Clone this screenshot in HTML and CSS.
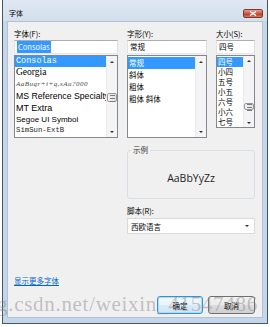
FILE: index.html
```html
<!DOCTYPE html>
<html lang="zh-CN">
<head>
    <meta charset="UTF-8">
    <meta name="viewport" content="width=device-width, initial-scale=1.0">
    <title>字体</title>
    <link rel="stylesheet" href="styles.css">
</head>
<body>
    <div class="window">
        <div class="titlebar">
            <span class="title">字体</span>
            <span class="close">
                <svg width="8" height="5" viewBox="0 0 8 5"><path d="M1 0.5 L7 4.5 M7 0.5 L1 4.5" stroke="#fff" stroke-width="1.4"/></svg>
            </span>
        </div>

        <div class="client">
            <div class="grid">
                <div class="label">字体(F):</div>
                <div class="label">字形(Y):</div>
                <div class="label">大小(S):</div>

                <div class="input"><span class="sel">Consolas</span></div>
                <div class="input">常规</div>
                <div class="input">四号</div>

                <div class="list font-list">
                    <div class="items">
                        <div class="item active f-consolas">Consolas</div>
                        <div class="item f-georgia">Georgia</div>
                        <div class="item f-script">AaBuqr+i+q,sAu?000</div>
                        <div class="item f-msref">MS Reference Specialty</div>
                        <div class="item f-mtextra">MT Extra</div>
                        <div class="item f-segoe">Segoe UI Symbol</div>
                        <div class="item f-simsun">SimSun-ExtB</div>
                    </div>
                    <div class="scroll">
                        <span class="btn"><span class="arrow up"></span></span>
                        <span class="track"><span class="thumb"></span></span>
                        <span class="btn"><span class="arrow down"></span></span>
                    </div>
                </div>

                <div class="list style-list">
                    <div class="items">
                        <div class="item active">常规</div>
                        <div class="item">斜体</div>
                        <div class="item">粗体</div>
                        <div class="item">粗体 斜体</div>
                    </div>
                    <div class="scroll">
                        <span class="btn"><span class="arrow up"></span></span>
                        <span class="track"></span>
                        <span class="btn"><span class="arrow down"></span></span>
                    </div>
                </div>

                <div class="list size-list">
                    <div class="items">
                        <div class="item active">四号</div>
                        <div class="item">小四</div>
                        <div class="item">五号</div>
                        <div class="item">小五</div>
                        <div class="item">六号</div>
                        <div class="item">小六</div>
                        <div class="item">七号</div>
                    </div>
                    <div class="scroll">
                        <span class="btn"><span class="arrow up"></span></span>
                        <span class="track"><span class="thumb"></span></span>
                        <span class="btn"><span class="arrow down"></span></span>
                    </div>
                </div>

                <fieldset class="sample">
                    <legend>示例</legend>
                    <div class="sample-text">AaBbYyZz</div>
                </fieldset>

                <div class="label script-label">脚本(R):</div>
                <div class="combo">
                    <span>西欧语言</span>
                    <span class="arrow down"></span>
                </div>
            </div>

            <a class="more" href="#">显示更多字体</a>

            <div class="actions">
                <button class="button default">确定</button>
                <button class="button cancel">取消</button>
            </div>
        </div>
    </div>

    <div class="watermark">g.csdn.net/weixin_41547486</div>
</body>
</html>
```

FILE: styles.css
```css
* {
    box-sizing: border-box;
}

body {
    margin: 0;
    background: #fff;
    font-family: "Noto Sans CJK SC", "Noto Sans", sans-serif;
    font-size: 7.5px;
    color: #000;
}

.window {
    display: flex;
    flex-direction: column;
    width: 266px;
    height: 324px;
    margin-left: 2px;
    padding-bottom: 5px;
    border: 1px solid #4a5563;
    border-top: none;
    background: #c3d6ec;
}

.titlebar {
    display: flex;
    justify-content: space-between;
    align-items: flex-start;
    height: 21px;
    padding: 0 4px 0 6px;
    background: linear-gradient(#dfe8f3, #d3dfed);
}

.title {
    margin-top: 8px;
    line-height: 10px;
    font-size: 7px;
}

.close {
    display: flex;
    justify-content: center;
    align-items: center;
    width: 20px;
    height: 9px;
    margin-top: 9px;
    border: 1px solid #86392b;
    border-radius: 2px;
    background: linear-gradient(#e6a191, #c9553f 50%, #b73a23 55%, #d47a62);
}

.client {
    display: flex;
    flex-direction: column;
    flex: 1;
    margin: 0 4px;
    padding: 7px 7px 3px 6px;
    border: 1px solid #b3c2d3;
    background: #f0f0f0;
}

.grid {
    display: grid;
    grid-template-columns: 104px 80px 39px;
    column-gap: 9px;
    align-items: start;
}

.label {
    height: 10px;
    line-height: 10px;
}

.input {
    height: 14px;
    margin-top: 1px;
    padding-left: 2px;
    line-height: 12px;
    white-space: nowrap;
    background: #fff;
    border: 1px solid;
    border-color: #abadb3 #dbdfe6 #e3e9ef #e2e3ea;
}

.sel {
    display: inline-block;
    padding: 0 1px;
    background: #3399ff;
    color: #fff;
}

/* list boxes */

.list {
    display: flex;
    height: 83px;
    margin-top: 1px;
    background: #fff;
    border: 1px solid #828790;
    overflow: hidden;
}

.items {
    flex: 1;
    min-width: 0;
    overflow: hidden;
}

.item {
    height: 12px;
    padding-left: 1px;
    line-height: 12px;
    white-space: nowrap;
    overflow: hidden;
}

.item.active {
    background: #3399ff;
    color: #fff;
}

.font-list .item {
    font-family: "Liberation Sans", sans-serif;
    height: 11px;
    line-height: 11px;
}

.font-list .f-consolas {
    font-family: "Liberation Mono", monospace;
    font-size: 8.5px;
}

.font-list .f-georgia {
    font-family: "Liberation Serif", serif;
    font-size: 9.5px;
}

.font-list .f-script {
    height: 12px;
    line-height: 12px;
    font-family: "Liberation Serif", serif;
    font-style: italic;
    font-size: 7px;
    letter-spacing: 0.5px;
    color: #444;
}

.font-list .f-msref {
    height: 13px;
    line-height: 13px;
    font-size: 8.7px;
}

.font-list .f-mtextra {
    font-size: 9px;
}

.font-list .f-segoe {
    font-size: 8px;
}

.font-list .f-simsun {
    font-family: "Liberation Mono", monospace;
    font-size: 7.3px;
    color: #222;
}

.style-list .items {
    padding-top: 1px;
}

.size-list {
    height: 73px;
}

.size-list .items {
    padding-top: 1px;
}

.size-list .item {
    height: 10px;
    line-height: 10px;
}

/* scroll bars */

.scroll {
    display: flex;
    flex-direction: column;
    width: 11px;
    background: #f4f4f4;
    border-left: 1px solid #ebebeb;
}

.btn {
    display: flex;
    justify-content: center;
    align-items: center;
    height: 11px;
}

.track {
    flex: 1;
}

.arrow {
    width: 0;
    height: 0;
    border-left: 2px solid transparent;
    border-right: 2px solid transparent;
}

.arrow.up {
    border-bottom: 2px solid #333;
}

.arrow.down {
    border-top: 2px solid #333;
}

.thumb {
    position: relative;
    display: block;
    height: 9px;
    margin: 26px 0 0;
    border: 1px solid #979797;
    border-radius: 2px;
    background: linear-gradient(90deg, #f3f3f3, #e2e2e2);
}

.thumb::after {
    content: "";
    position: absolute;
    left: 2px;
    top: 1px;
    width: 5px;
    height: 5px;
    border-top: 1px solid #7a7a7a;
    border-bottom: 1px solid #7a7a7a;
    background: linear-gradient(#7a7a7a, #7a7a7a) center / 100% 1px no-repeat;
}

.size-list .btn {
    height: 9px;
}

.size-list .thumb {
    height: 7px;
    margin-top: 38px;
}

.size-list .thumb::after {
    top: 0;
    height: 5px;
    left: 2px;
}

/* sample + script */

.sample {
    grid-column: 2 / 4;
    margin: 7px 0 0;
    padding: 0;
    min-width: 0;
    border: 1px solid #d5dfe5;
    border-radius: 3px;
}

.sample legend {
    margin-left: 3px;
    padding: 0 2px;
    line-height: 10px;
    color: #333;
}

.sample-text {
    padding: 16px 0 13px;
    line-height: 14px;
    text-align: center;
    font-family: "Open Sans", sans-serif;
    font-size: 10.5px;
    color: #1e1e1e;
}

.script-label {
    grid-column: 2 / 4;
    margin-top: 7px;
}

.combo {
    grid-column: 2 / 4;
    display: flex;
    justify-content: space-between;
    align-items: center;
    height: 16px;
    margin-top: 2px;
    padding: 0 5px 0 3px;
    background: #fff;
    border: 1px solid #d9d9d9;
}

/* footer */

.more {
    align-self: flex-start;
    margin-top: auto;
    line-height: 10px;
    color: #0066cc;
}

.actions {
    display: flex;
    justify-content: flex-end;
    gap: 5px;
    margin-top: 10px;
}

.button {
    height: 18px;
    padding: 0;
    font-family: inherit;
    font-size: 7.5px;
    color: #000;
    border: 1px solid #707070;
    border-radius: 3px;
    background: linear-gradient(#f2f2f2, #ebebeb 50%, #dddddd 50%, #cfcfcf);
}

.button.default {
    width: 46px;
    border-color: #3c8fd0;
    background: linear-gradient(#f4f9fd, #e8f3fb 50%, #d9ebf8 50%, #cfe5f5);
    box-shadow: inset 0 0 0 1px #a9dcf8;
}

.button.cancel {
    width: 47px;
}

.watermark {
    position: absolute;
    left: -3px;
    top: 294px;
    font-family: "Liberation Serif", serif;
    font-size: 21px;
    line-height: 21px;
    letter-spacing: 0.7px;
    white-space: nowrap;
    color: rgba(130, 130, 130, 0.45);
    pointer-events: none;
}
```
